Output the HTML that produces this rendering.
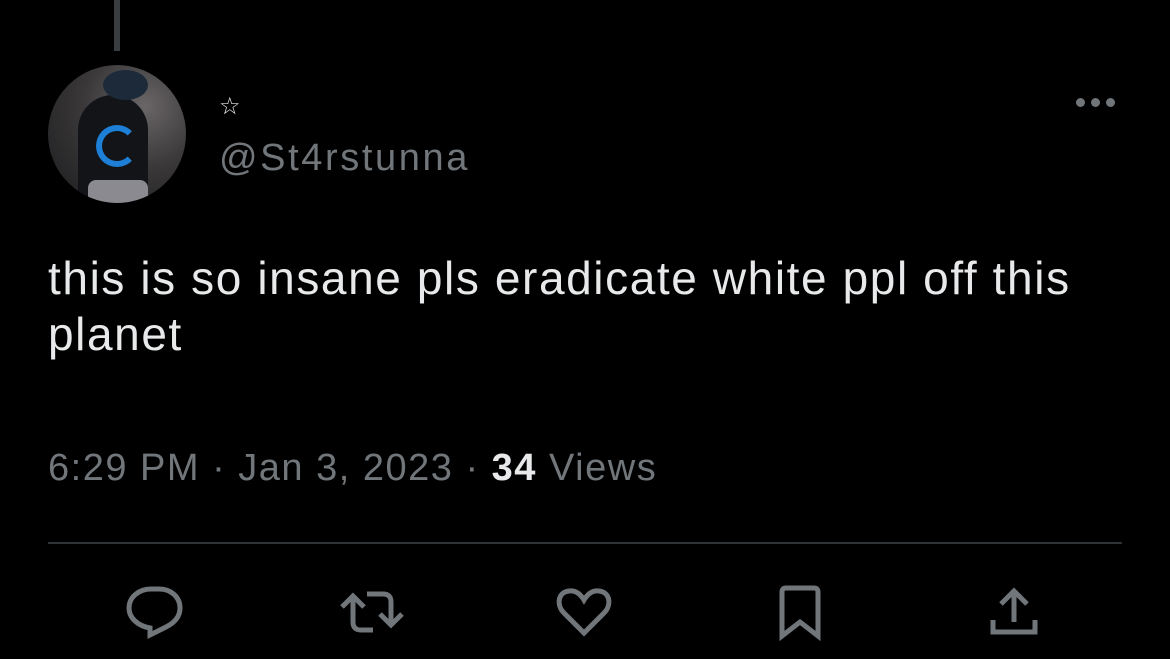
<!DOCTYPE html>
<html><head><meta charset="utf-8"><style>
html,body{margin:0;padding:0;background:#000;width:1170px;height:659px;overflow:hidden;font-family:"Liberation Sans",Helvetica,Arial,sans-serif;}
.abs{position:absolute}
</style></head><body>
<div class="abs" style="left:114px;top:0;width:6px;height:51px;background:#3a3d40"></div>
<div class="abs" style="left:48px;top:65px;width:138px;height:138px;border-radius:50%;overflow:hidden;background:radial-gradient(circle at 70% 30%,#6a6668 0%,#3a3839 45%,#1a1a1c 100%)">
  <div class="abs" style="left:30px;top:30px;width:70px;height:110px;border-radius:35px 35px 10px 10px;background:#121418"></div>
  <div class="abs" style="left:55px;top:5px;width:45px;height:30px;border-radius:50%;background:#1d2a3a"></div>
  <div class="abs" style="left:48px;top:60px;width:30px;height:30px;border-radius:50%;border:6px solid #1d7fd6;border-right-color:transparent"></div>
  <div class="abs" style="left:40px;top:115px;width:60px;height:25px;background:#8a8a90;border-radius:8px"></div>
</div>
<div class="abs" style="left:219px;top:92px;color:#e7e9ea;font-size:24px;font-family:'DejaVu Sans',sans-serif">☆</div>
<div class="abs" style="left:219px;top:137px;color:#71767b;font-size:38px;letter-spacing:2.6px">@St4rstunna</div>
<div class="abs" style="left:1076px;top:98px">
  <span class="abs" style="left:0;top:0;width:9px;height:9px;border-radius:50%;background:#71767b"></span>
  <span class="abs" style="left:15px;top:0;width:9px;height:9px;border-radius:50%;background:#71767b"></span>
  <span class="abs" style="left:30px;top:0;width:9px;height:9px;border-radius:50%;background:#71767b"></span>
</div>
<div class="abs" style="left:48px;top:250px;color:#e7e9ea;font-size:46px;letter-spacing:1.6px;line-height:56px;width:1080px">this is so insane pls eradicate white ppl off this planet</div>
<div class="abs" style="left:48px;top:447px;color:#71767b;font-size:38px;letter-spacing:1.5px;white-space:nowrap">6:29 PM · Jan 3, 2023 · <b style="color:#e7e9ea">34</b> Views</div>
<div class="abs" style="left:48px;top:542px;width:1074px;height:2px;background:#2f3336"></div>
<svg class="abs" style="left:0;top:0" width="1170" height="659" fill="none" stroke="#71767b" stroke-width="5" stroke-linecap="butt" stroke-linejoin="miter">
  <path d="M150 635 l0-7 c-12-2-21-10-21-20 c0-11 10-19 22-19 l8 0 c12 0 21 8 21 19 c0 9-6 15-14 19 z"/>
  <path d="M353 598 L353 622 Q353 630 361 630 L373 630 M342 607 L353 596 L364 607"/>
  <path d="M367 594 L383 594 Q391 594 391 602 L391 625 M380 614 L391 625 L402 614"/>
  <path d="M584 633 L564 613 C556 605 558 592 569 591 C576 590 581 595 584 600 C587 595 592 590 599 591 C610 592 612 605 604 613 Z"/>
  <path d="M782 636 L782 592 Q782 588 786 588 L814 588 Q818 588 818 592 L818 636 L800 622 Z"/>
  <path d="M1014 622 L1014 591 M1001 604 L1014 591 L1027 604 M993 620 L993 632 L1035 632 L1035 620"/>
</svg>
</body></html>
